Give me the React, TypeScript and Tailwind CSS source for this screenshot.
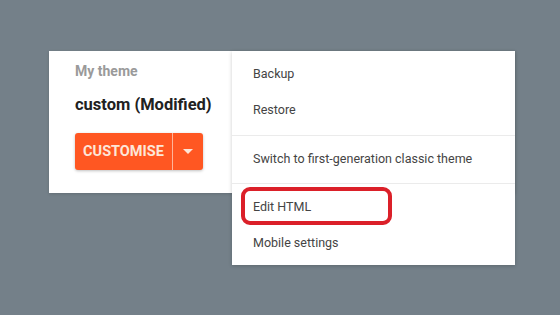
import React from "react";

export default function App() {
  const font = { fontFamily: "Roboto, 'Noto Sans', Arial, sans-serif" };
  return (
    <div
      className="w-[560px] h-[315px] bg-[#748089] pt-[51px] pl-[49px] overflow-hidden"
      style={font}
    >
      <div className="relative w-[466px] h-[142px] bg-white shadow-[0_1px_3px_rgba(0,0,0,0.15)]">
        <div className="pl-[26px] pt-[12px] flex flex-col">
          <div className="text-[14px] leading-[16px] font-bold text-[#9a9a9a]">My theme</div>
          <div className="mt-[16px] text-[16.5px] leading-[20px] font-bold text-[#212121]">
            custom (Modified)
          </div>
          <div className="mt-[18px] flex w-[128px] h-[37px] rounded-[3px] bg-[#ff5722] shadow-[0_1px_3px_rgba(0,0,0,0.25)]">
            <div className="w-[97px] flex items-center justify-center text-[14.5px] font-bold text-[#fde6d8]">
              CUSTOMISE
            </div>
            <div className="w-px bg-[#ffb59a]" />
            <div className="flex-1 flex items-center justify-center">
              <svg width="10" height="6" viewBox="0 0 10 6">
                <path d="M0 0 L10 0 L5 5 Z" fill="#fde6d8" />
              </svg>
            </div>
          </div>
        </div>

        <div className="absolute left-[183px] top-0 w-[283px] h-[214px] bg-white shadow-[0_1px_4px_rgba(0,0,0,0.2)] text-[12.5px] text-[#444444]">
          <div className="pt-[5px] pb-[7px] border-b border-[#ebebeb]">
            <div className="h-[36px] flex items-center pl-[21px]">Backup</div>
            <div className="h-[36px] flex items-center pl-[21px]">Restore</div>
          </div>
          <div className="pt-[5px] pb-[6px] border-b border-[#ebebeb]">
            <div className="h-[36px] flex items-center pl-[21px]">
              Switch to first-generation classic theme
            </div>
          </div>
          <div className="pt-[5px]">
            <div className="relative h-[36px] flex items-center pl-[21px]">
              Edit HTML
              <div className="absolute left-[9px] top-[-2px] w-[151px] h-[38px] border-[4px] border-[#db2029] rounded-[9px]" />
            </div>
            <div className="h-[36px] flex items-center pl-[21px]">Mobile settings</div>
          </div>
        </div>
      </div>
    </div>
  );
}
